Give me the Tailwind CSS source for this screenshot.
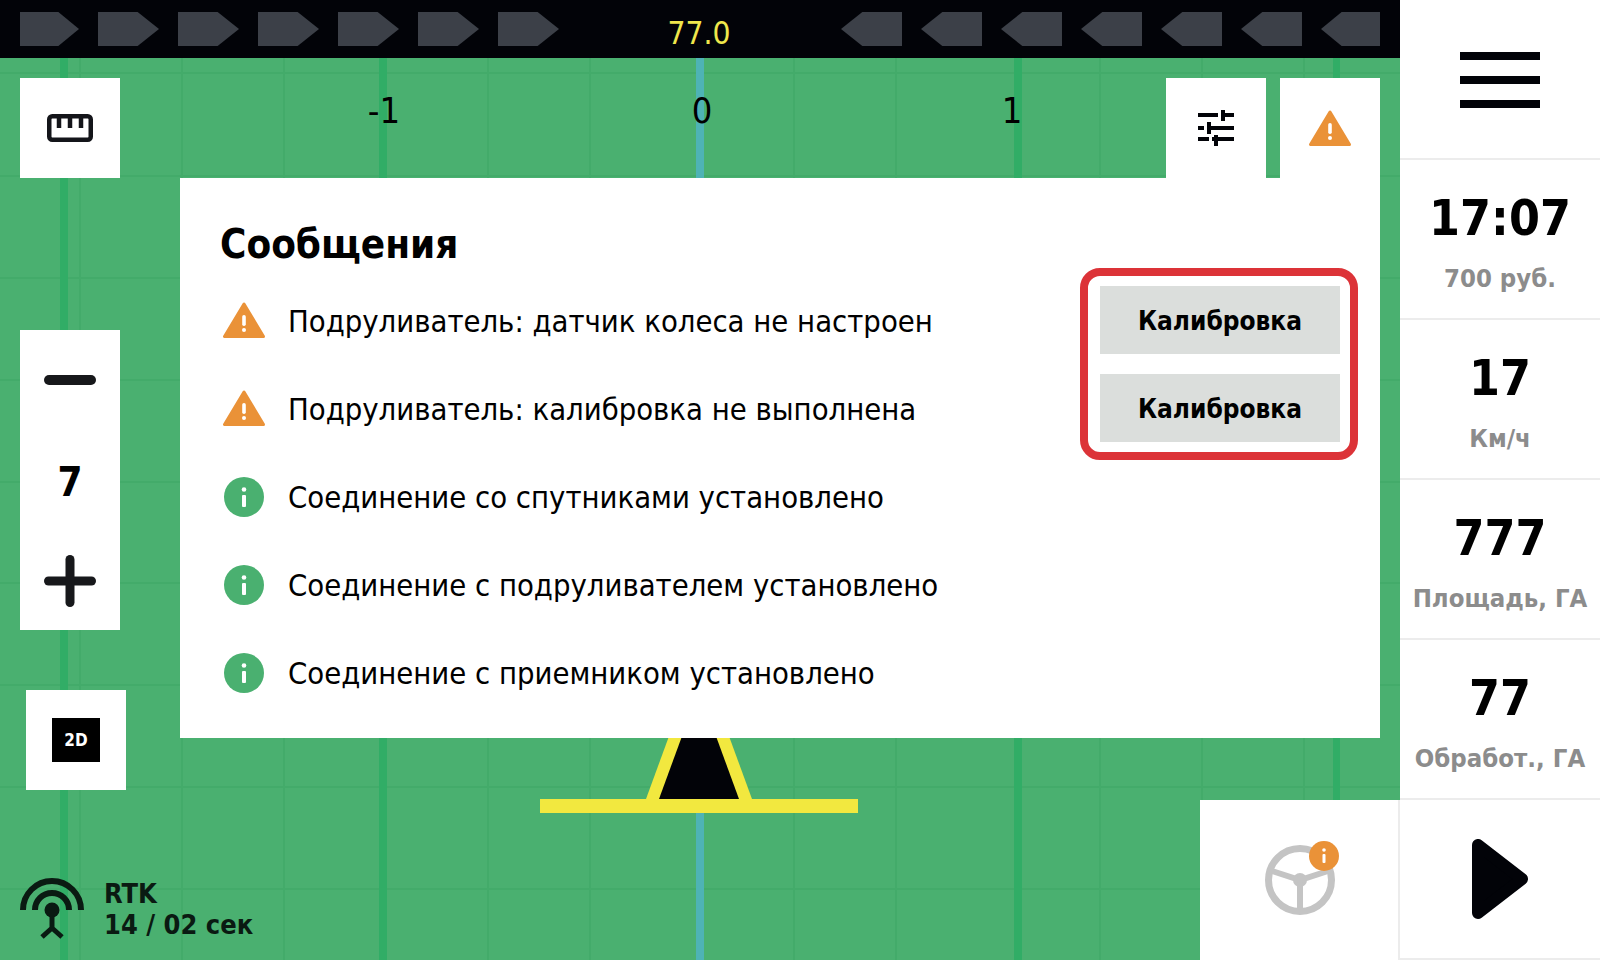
<!DOCTYPE html>
<html lang="ru">
<head>
  <meta charset="UTF-8">
  <title>Сообщения</title>
  <script src="https://cdn.jsdelivr.net/npm/@tailwindcss/browser@4"></script>
</head>
<body class="bg-white">
  <div class="flex w-[1600px] h-[960px] overflow-hidden font-['DejaVu_Sans',sans-serif] [font-stretch:condensed] text-black">

    <!-- map side -->
    <div class="w-[1400px] flex flex-col">
      <!-- top bar -->
      <div class="h-[58px] bg-[#020308] flex items-start justify-between px-5 pt-3">
        <div class="flex gap-[19px]">
          <div class="w-[59px] h-[34px] bg-[#3c4048] [clip-path:polygon(0_0,65%_0,100%_50%,65%_100%,0_100%)]"></div>
          <div class="w-[61px] h-[34px] bg-[#3c4048] [clip-path:polygon(0_0,65%_0,100%_50%,65%_100%,0_100%)]"></div>
          <div class="w-[61px] h-[34px] bg-[#3c4048] [clip-path:polygon(0_0,65%_0,100%_50%,65%_100%,0_100%)]"></div>
          <div class="w-[61px] h-[34px] bg-[#3c4048] [clip-path:polygon(0_0,65%_0,100%_50%,65%_100%,0_100%)]"></div>
          <div class="w-[61px] h-[34px] bg-[#3c4048] [clip-path:polygon(0_0,65%_0,100%_50%,65%_100%,0_100%)]"></div>
          <div class="w-[61px] h-[34px] bg-[#3c4048] [clip-path:polygon(0_0,65%_0,100%_50%,65%_100%,0_100%)]"></div>
          <div class="w-[61px] h-[34px] bg-[#3c4048] [clip-path:polygon(0_0,65%_0,100%_50%,65%_100%,0_100%)]"></div>
        </div>
        <div class="-ml-[2px] text-[31.5px] leading-[42px] text-[#efe74c]">77.0</div>
        <div class="flex gap-[19px]">
          <div class="w-[61px] h-[34px] bg-[#3c4048] [clip-path:polygon(35%_0,100%_0,100%_100%,35%_100%,0_50%)]"></div>
          <div class="w-[61px] h-[34px] bg-[#3c4048] [clip-path:polygon(35%_0,100%_0,100%_100%,35%_100%,0_50%)]"></div>
          <div class="w-[61px] h-[34px] bg-[#3c4048] [clip-path:polygon(35%_0,100%_0,100%_100%,35%_100%,0_50%)]"></div>
          <div class="w-[61px] h-[34px] bg-[#3c4048] [clip-path:polygon(35%_0,100%_0,100%_100%,35%_100%,0_50%)]"></div>
          <div class="w-[61px] h-[34px] bg-[#3c4048] [clip-path:polygon(35%_0,100%_0,100%_100%,35%_100%,0_50%)]"></div>
          <div class="w-[61px] h-[34px] bg-[#3c4048] [clip-path:polygon(35%_0,100%_0,100%_100%,35%_100%,0_50%)]"></div>
          <div class="w-[59px] h-[34px] bg-[#3c4048] [clip-path:polygon(35%_0,100%_0,100%_100%,35%_100%,0_50%)]"></div>
        </div>
      </div>

      <!-- map -->
      <div class="relative flex-1 bg-[#4ab070]">
        <svg class="absolute inset-0" width="1400" height="902" viewBox="0 0 1400 902">
          <g stroke="#43ab6a" stroke-width="2">
            <path d="M80 0V902M182 0V902M284 0V902M488 0V902M590 0V902M794 0V902M896 0V902M1100 0V902M1202 0V902M1304 0V902"/>
            <path d="M0 15H1400M0 118H1400M0 220H1400M0 322H1400M0 424H1400M0 525H1400M0 627H1400M0 729H1400M0 831H1400"/>
          </g>
          <g fill="#31ad66">
            <rect x="60" y="0" width="8" height="902"/>
            <rect x="379" y="0" width="8" height="902"/>
            <rect x="1014" y="0" width="8" height="902"/>
            <rect x="1333" y="0" width="7" height="902"/>
          </g>
          <rect x="696" y="0" width="8" height="902" fill="#4eb3b5"/>
          <!-- tractor -->
          <polygon points="672,670 726,670 752,741 646,741" fill="#f2e83f"/>
          <polygon points="685,670 713,670 739,741 659,741" fill="#020308"/>
          <rect x="540" y="741" width="318" height="14" fill="#f2e83f"/>
        </svg>

        <!-- scale -->
        <div class="absolute left-[349px] top-[33px] w-[70px] text-center text-[36px] leading-[40px]">-1</div>
        <div class="absolute left-[667px] top-[33px] w-[70px] text-center text-[36px] leading-[40px]">0</div>
        <div class="absolute left-[977px] top-[33px] w-[70px] text-center text-[36px] leading-[40px]">1</div>

        <!-- ruler -->
        <div class="absolute left-5 top-5 w-[100px] h-[100px] bg-white flex items-center justify-center">
          <svg width="46" height="28" viewBox="0 0 46 28" fill="none" stroke="#14151a" stroke-width="4.500">
            <rect x="2.250" y="2.250" width="41.500" height="23.500" rx="3"/>
            <path d="M12 2V14M23 2V14M34 2V14"/>
          </svg>
        </div>

        <!-- zoom -->
        <div class="absolute left-5 top-[272px] w-[100px] h-[300px] bg-white flex flex-col items-center">
          <svg class="mt-[45px]" width="52" height="10" viewBox="0 0 52 10"><rect width="52" height="10" rx="5" fill="#17181b"/></svg>
          <div class="mt-[72px] h-[50px] text-[40px] leading-[50px] font-bold">7</div>
          <svg class="mt-[48px]" width="52" height="52" viewBox="0 0 52 52" fill="#17181b">
            <rect y="21.500" width="52" height="9" rx="4.500"/>
            <rect x="21.500" width="9" height="52" rx="4.500"/>
          </svg>
        </div>

        <!-- 2D -->
        <div class="absolute left-[26px] top-[632px] w-[100px] h-[100px] bg-white flex items-center justify-center">
          <div class="w-12 h-11 pt-px bg-black text-white flex items-center justify-center text-[17px] font-bold">2D</div>
        </div>

        <!-- RTK -->
        <div class="absolute left-5 top-[820px] flex items-start gap-[20px]">
          <svg width="64" height="62" viewBox="0 0 64 62" fill="none" stroke="#0a1a12">
            <path d="M3 32A29 29 0 0 1 61 32" stroke-width="6"/>
            <path d="M15 32A17 17 0 0 1 49 32" stroke-width="6"/>
            <circle cx="32" cy="32" r="7.500" fill="#0a1a12" stroke="none"/>
            <path d="M32 34V50M22 59L32 50L42 59" stroke-width="5"/>
          </svg>
          <div class="text-[27px] leading-[31px] font-bold text-[#0a1a12] whitespace-pre">RTK<br>14 / 02 сек</div>
        </div>

        <!-- sliders -->
        <div class="absolute left-[1166px] top-5 w-[100px] h-[100px] bg-white flex items-center justify-center">
          <svg width="36" height="36" viewBox="0 0 36 36" fill="#020308">
            <rect x="0" y="3" width="20" height="4"/><rect x="23" y="0" width="4" height="11"/><rect x="27" y="3" width="9" height="4"/>
            <rect x="0" y="16" width="6" height="4"/><rect x="9" y="12" width="4" height="12"/><rect x="13" y="16" width="23" height="4"/>
            <rect x="0" y="27" width="11" height="4"/><rect x="16" y="25" width="4" height="11"/><rect x="14" y="27" width="22" height="4"/>
          </svg>
        </div>

        <!-- warnings tab -->
        <div class="absolute left-[1280px] top-5 w-[100px] h-[100px] bg-white flex items-center justify-center">
          <svg class="mt-[2px]" width="48" height="48" viewBox="0 0 48 48">
            <polygon points="24,7 4.500,39.500 43.500,39.500" fill="#ea9238" stroke="#ea9238" stroke-width="3" stroke-linejoin="round"/>
            <rect x="22.200" y="18" width="3.600" height="11" rx="1.800" fill="#fff"/>
            <circle cx="24" cy="33" r="2" fill="#fff"/>
          </svg>
        </div>

        <!-- messages -->
        <div class="absolute left-[180px] top-[120px] w-[1200px] h-[560px] bg-white flex justify-between pl-10 pr-[22px]">
          <div>
            <div class="mt-[39px] mb-[6px] h-[54px] text-[40px] leading-[54px] font-bold">Сообщения</div>
            <div class="flex items-center gap-5 h-[88px] text-[30.7px]">
              <svg width="48" height="48" viewBox="0 0 48 48">
                <polygon points="24,7 4.500,39.500 43.500,39.500" fill="#ea9238" stroke="#ea9238" stroke-width="3" stroke-linejoin="round"/>
                <rect x="22.200" y="18" width="3.600" height="11" rx="1.800" fill="#fff"/>
                <circle cx="24" cy="33" r="2" fill="#fff"/>
              </svg>
              <span class="pt-[2px]">Подруливатель: датчик колеса не настроен</span>
            </div>
            <div class="flex items-center gap-5 h-[88px] text-[30.7px]">
              <svg width="48" height="48" viewBox="0 0 48 48">
                <polygon points="24,7 4.500,39.500 43.500,39.500" fill="#ea9238" stroke="#ea9238" stroke-width="3" stroke-linejoin="round"/>
                <rect x="22.200" y="18" width="3.600" height="11" rx="1.800" fill="#fff"/>
                <circle cx="24" cy="33" r="2" fill="#fff"/>
              </svg>
              <span class="pt-[2px]">Подруливатель: калибровка не выполнена</span>
            </div>
            <div class="flex items-center gap-5 h-[88px] text-[30.7px]">
              <svg width="48" height="48" viewBox="0 0 48 48">
                <circle cx="24" cy="24" r="20" fill="#4ab070"/>
                <rect x="22" y="22" width="4" height="12" rx="1" fill="#fff"/>
                <circle cx="24" cy="16.500" r="2.300" fill="#fff"/>
              </svg>
              <span class="pt-[2px]">Соединение со спутниками установлено</span>
            </div>
            <div class="flex items-center gap-5 h-[88px] text-[30.7px]">
              <svg width="48" height="48" viewBox="0 0 48 48">
                <circle cx="24" cy="24" r="20" fill="#4ab070"/>
                <rect x="22" y="22" width="4" height="12" rx="1" fill="#fff"/>
                <circle cx="24" cy="16.500" r="2.300" fill="#fff"/>
              </svg>
              <span class="pt-[2px]">Соединение с подруливателем установлено</span>
            </div>
            <div class="flex items-center gap-5 h-[88px] text-[30.7px]">
              <svg width="48" height="48" viewBox="0 0 48 48">
                <circle cx="24" cy="24" r="20" fill="#4ab070"/>
                <rect x="22" y="22" width="4" height="12" rx="1" fill="#fff"/>
                <circle cx="24" cy="16.500" r="2.300" fill="#fff"/>
              </svg>
              <span class="pt-[2px]">Соединение с приемником установлено</span>
            </div>
          </div>

          <div class="mt-[90px] self-start w-[278px] h-[192px] border-8 border-[#dc3338] rounded-[20px] pt-[10px] pl-3 flex flex-col gap-5">
            <div class="w-[240px] h-[68px] pt-[2px] bg-[#dbdedc] flex items-center justify-center text-[26px] font-bold">Калибровка</div>
            <div class="w-[240px] h-[68px] pt-[2px] bg-[#dbdedc] flex items-center justify-center text-[26px] font-bold">Калибровка</div>
          </div>
        </div>

        <!-- steering -->
        <div class="absolute right-0 bottom-0 w-[200px] h-[160px] bg-white border-r-2 border-[#ececec]">
          <svg width="198" height="160" viewBox="0 0 198 160">
            <circle cx="100" cy="80" r="31.500" fill="none" stroke="#c4c4c4" stroke-width="7"/>
            <circle cx="100" cy="80" r="7" fill="#c4c4c4"/>
            <path d="M72 71L100 80L128 71M100 80V110" fill="none" stroke="#c4c4c4" stroke-width="6"/>
            <circle cx="124" cy="56" r="15" fill="#ea9238"/>
            <rect x="122.500" y="54" width="3" height="9" rx="1" fill="#fff"/>
            <circle cx="124" cy="50" r="1.800" fill="#fff"/>
          </svg>
        </div>
      </div>
    </div>

    <!-- right column -->
    <div class="w-[200px] flex flex-col">
      <div class="h-[160px] pt-[2px] border-b-2 border-[#ececec] flex flex-col items-center justify-center gap-4">
        <div class="w-20 h-2 bg-[#020308]"></div>
        <div class="w-20 h-2 bg-[#020308]"></div>
        <div class="w-20 h-2 bg-[#020308]"></div>
      </div>
      <div class="h-[160px] border-b-2 border-[#ececec] flex flex-col items-center pt-[28px]">
        <div class="h-[60px] text-[49.5px] leading-[60px] font-bold">17:07</div>
        <div class="h-[60px] text-[25.5px] leading-[60px] font-bold text-[#8c8c8c] whitespace-nowrap">700 руб.</div>
      </div>
      <div class="h-[160px] border-b-2 border-[#ececec] flex flex-col items-center pt-[28px]">
        <div class="h-[60px] text-[49.5px] leading-[60px] font-bold">17</div>
        <div class="h-[60px] text-[25.5px] leading-[60px] font-bold text-[#8c8c8c] whitespace-nowrap">Км/ч</div>
      </div>
      <div class="h-[160px] border-b-2 border-[#ececec] flex flex-col items-center pt-[28px]">
        <div class="h-[60px] text-[49.5px] leading-[60px] font-bold">777</div>
        <div class="h-[60px] text-[25.5px] leading-[60px] font-bold text-[#8c8c8c] whitespace-nowrap">Площадь, ГА</div>
      </div>
      <div class="h-[160px] border-b-2 border-[#ececec] flex flex-col items-center pt-[28px]">
        <div class="h-[60px] text-[49.5px] leading-[60px] font-bold">77</div>
        <div class="h-[60px] text-[25.5px] leading-[60px] font-bold text-[#8c8c8c] whitespace-nowrap">Обработ., ГА</div>
      </div>
      <div class="h-[160px] border-b-2 border-[#ececec] flex items-center justify-center">
        <svg width="56" height="80" viewBox="0 0 56 80">
          <polygon points="6,6 6,74 50,40" fill="#020308" stroke="#020308" stroke-width="12" stroke-linejoin="round"/>
        </svg>
      </div>
    </div>
  </div>
</body>
</html>
